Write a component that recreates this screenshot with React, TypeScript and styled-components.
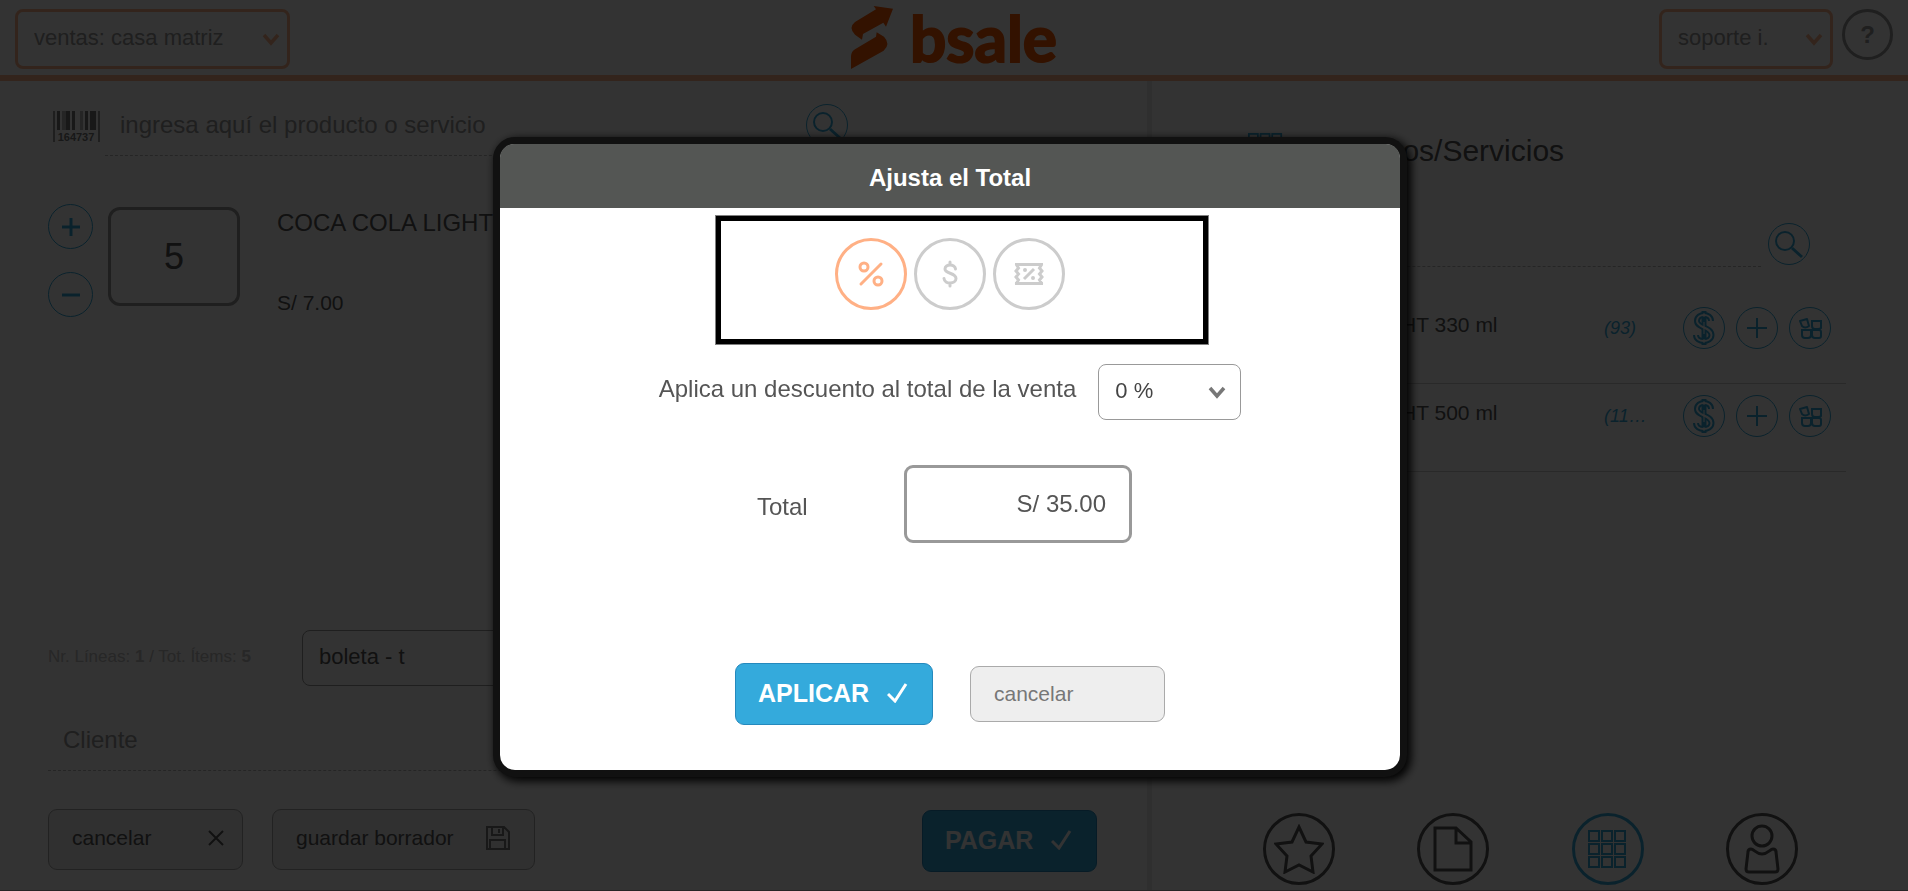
import React from "react";
import styled, { createGlobalStyle, css } from "styled-components";

const INK = "#555";
const GREY = "#999";
const BLUE = "#34aadc";
const ORANGE = "#ffb48c";

const GlobalStyle = createGlobalStyle`
  *, *::before, *::after { box-sizing: border-box; }
  body {
    margin: 0;
    background: #fff;
    color: ${INK};
    font-family: Arial, "Liberation Sans", sans-serif;
    font-size: 24px;
    line-height: 28px;
  }
  button, input, select { font-family: inherit; margin: 0; }
  h1, h2, p, ul { margin: 0; padding: 0; font-weight: normal; }
  ul { list-style: none; }
`;

const Page = styled.div`
  min-height: 100vh;
  display: flex;
  flex-direction: column;
  border-bottom: 1px solid #c8b8be;
`;

const TopBar = styled.header`
  display: grid;
  grid-template-columns: 1fr auto 1fr;
  align-items: start;
  height: 81px;
  padding: 0 15px;
  border-bottom: 6px solid ${ORANGE};
`;

const TopLeft = styled.div`
  padding-top: 9px;
`;

const TopRight = styled.div`
  display: flex;
  justify-content: flex-end;
  gap: 9px;
  padding-top: 9px;
`;

const Brand = styled.a`
  display: flex;
  align-items: flex-start;
  gap: 17px;
  padding-top: 6px;
  color: #ff5a00;
  text-decoration: none;
`;

const BrandName = styled.span`
  font-family: Lato, sans-serif;
  font-weight: 700;
  font-size: 64px;
  line-height: 64px;
  -webkit-text-stroke: 2px #ff5a00;
`;

const HelpButton = styled.button`
  width: 51px;
  height: 51px;
  padding: 0;
  border: 3px solid ${GREY};
  border-radius: 50%;
  background: none;
  color: ${GREY};
  font-size: 24px;
  font-weight: bold;
`;

type SelectTone = "accent" | "plain" | "dialog";

const selectTones = {
  accent: css`
    height: 60px;
    border: 3px solid ${ORANGE};
    color: ${GREY};
  `,
  plain: css`
    height: 56px;
    border: 1px solid ${GREY};
    color: ${INK};
  `,
  dialog: css`
    height: 56px;
    border: 1px solid ${GREY};
    color: #444;
  `,
};

const SelectBox = styled.div<{ $width: number }>`
  position: relative;
  width: ${(p) => p.$width}px;
  max-width: 100%;

  svg {
    position: absolute;
    right: 10px;
    top: 50%;
    margin-top: -6px;
    pointer-events: none;
  }
`;

const SelectField = styled.select<{ $tone: SelectTone }>`
  appearance: none;
  display: block;
  width: 100%;
  padding: 0 36px 3px 16px;
  border-radius: 8px;
  background: #fff;
  font-size: 22px;
  ${(p) => selectTones[p.$tone]}
`;

const Columns = styled.main`
  flex: 1;
  display: grid;
  grid-template-columns: minmax(0, 32fr) minmax(0, 21fr);
`;

const SalePane = styled.section`
  display: flex;
  flex-direction: column;
  padding: 23px 50px 18px 48px;
  border-right: 5px solid #ebebeb;
`;

const SearchRow = styled.form`
  display: flex;
  align-items: flex-start;
`;

const SaleSearch = styled(SearchRow)`
  padding: 0 249px 0 5px;
`;

const BarcodeSlot = styled.span`
  width: 52px;
  padding-top: 7px;
  line-height: 0;
`;

const LineInput = styled.input`
  flex: 1;
  min-width: 0;
  height: 52px;
  padding: 0 15px 10px;
  border: 0;
  border-bottom: 1px dashed #bbb;
  background: none;
  color: ${GREY};
  font-size: 24px;

  &::placeholder {
    color: ${GREY};
    opacity: 1;
  }
`;

const RoundButton = styled.button<{ $size?: number }>`
  flex: none;
  display: flex;
  align-items: center;
  justify-content: center;
  width: ${(p) => p.$size ?? 42}px;
  height: ${(p) => p.$size ?? 42}px;
  padding: 0;
  border: 1px solid ${BLUE};
  border-radius: 50%;
  background: none;
  color: ${BLUE};
`;

const SaleLine = styled.div`
  display: flex;
  align-items: flex-start;
  margin-top: 48px;
`;

const Stepper = styled.div`
  display: flex;
  flex-direction: column;
  gap: 23px;
  margin-right: 15px;
`;

const QuantityInput = styled.input`
  width: 132px;
  height: 99px;
  margin-top: 3px;
  padding: 0;
  border: 3px solid ${GREY};
  border-radius: 12px;
  background: none;
  color: ${INK};
  font-size: 36px;
  text-align: center;
`;

const LineInfo = styled.div`
  display: flex;
  flex-direction: column;
  gap: 54px;
  padding: 5px 0 0 37px;
`;

const LinePrice = styled.p`
  font-size: 21px;
  line-height: 24px;
`;

const SaleFooter = styled.div`
  margin-top: auto;
`;

const DocumentRow = styled.div`
  display: flex;
  align-items: center;
`;

const Counts = styled.p`
  flex: none;
  width: 254px;
  padding-bottom: 2px;
  color: #c0c0c0;
  font-size: 17px;
  line-height: 24px;
`;

const ClientRow = styled.div`
  display: flex;
  margin: 33px 0 38px;
`;

const ButtonRow = styled.div`
  display: flex;
  align-items: flex-start;
  gap: 29px;
`;

const ActionButton = styled.button<{ $width: number }>`
  display: flex;
  align-items: center;
  justify-content: space-between;
  width: ${(p) => p.$width}px;
  height: 61px;
  padding: 0 18px 4px 23px;
  border: 1px solid #aaa;
  border-radius: 9px;
  background: #eee;
  color: ${INK};
  font-size: 21px;
`;

const DraftButton = styled(ActionButton)`
  padding-right: 24px;
`;

const PrimaryButton = styled(ActionButton)`
  height: 62px;
  padding: 0 24px 2px 22px;
  border-color: #2589bd;
  background: ${BLUE};
  color: #fff;
  font-size: 25px;
  font-weight: bold;
`;

const PayButton = styled(PrimaryButton)`
  margin: 1px 0 0 auto;
`;

const CatalogPane = styled.section`
  display: flex;
  flex-direction: column;
  padding: 50px 62px 5px 70px;
`;

const CatalogTitle = styled.h2`
  display: flex;
  gap: 16px;
  padding-left: 26px;
  font-size: 30px;
  line-height: 40px;
`;

const TitleIcon = styled.span`
  display: flex;
  padding-top: 2px;
  color: ${BLUE};
`;

const CatalogSearch = styled(SearchRow)`
  gap: 7px;
  margin-top: 52px;
  padding-right: 36px;

  input { height: 44px; }
`;

const ProductList = styled.ul`
  margin-top: 29px;
`;

const Product = styled.li`
  display: flex;
  height: 88px;
  padding: 11px 15px 0 18px;
  border-bottom: 1px solid #ccc;
  font-size: 21px;
`;

const ProductName = styled.span`
  flex: 1;
  line-height: 36px;
  white-space: nowrap;
`;

const Stock = styled.span`
  width: 79px;
  color: ${BLUE};
  font-size: 18px;
  font-style: italic;
  line-height: 42px;
`;

const ProductActions = styled.div`
  display: flex;
  gap: 11px;
`;

const BottomNav = styled.nav`
  display: grid;
  grid-template-columns: repeat(4, 1fr);
  justify-items: center;
  margin: auto 7px 0 0;
`;

const NavButton = styled.button<{ $active?: boolean }>`
  display: flex;
  align-items: center;
  justify-content: center;
  width: 72px;
  height: 72px;
  padding: 0;
  border: 3px solid currentColor;
  border-radius: 50%;
  background: none;
  color: ${(p) => (p.$active ? BLUE : INK)};
`;

const Backdrop = styled.div`
  position: fixed;
  inset: 0;
  display: flex;
  align-items: flex-start;
  justify-content: center;
  padding: 137px 8px 0 0;
  background: rgba(0, 0, 0, 0.8);
`;

const Dialog = styled.section`
  position: relative;
  width: 914px;
  max-width: 100%;
  border: 7px solid #111;
  border-radius: 22px;
  background: #fff;
  box-shadow: 3px 3px 10px 1px #000;
`;

const DialogTitle = styled.h2`
  height: 64px;
  padding-top: 2px;
  border-radius: 14px 14px 0 0;
  background: #545654;
  color: #fff;
  font-size: 24px;
  font-weight: bold;
  line-height: 64px;
  text-align: center;
`;

const DialogBody = styled.form`
  display: flex;
  flex-direction: column;
  align-items: center;
  padding: 30px 0 45px;
`;

const ModeFrame = styled.div`
  position: absolute;
  left: 215px;
  top: 71px;
  width: 494px;
  height: 130px;
  border: 6px solid #000;
  outline: 1px solid #808080;
  outline-offset: -1px;
  pointer-events: none;
`;

const ModeRow = styled.div`
  display: flex;
  gap: 7px;
`;

const ModeButton = styled.button<{ $active?: boolean }>`
  display: flex;
  align-items: center;
  justify-content: center;
  width: 72px;
  height: 72px;
  padding: 0;
  border: 3px solid currentColor;
  border-radius: 50%;
  background: none;
  color: ${(p) => (p.$active ? "#ffb085" : "#ccc")};
`;

const DiscountRow = styled.div`
  display: flex;
  align-items: center;
  gap: 22px;
  margin-top: 54px;

  label { padding-bottom: 7px; }
  svg { right: 15px; }
`;

const TotalRow = styled.div`
  display: flex;
  align-items: center;
  width: 386px;
  margin-top: 45px;

  label {
    width: 147px;
    padding-top: 5px;
  }
`;

const TotalInput = styled.input`
  width: 228px;
  height: 78px;
  padding: 0 23px 0 22px;
  border: 3px solid ${GREY};
  border-radius: 9px;
  background: #fff;
  color: ${INK};
  font-size: 24px;
  text-align: right;
`;

const DialogActions = styled.div`
  display: flex;
  align-items: center;
  gap: 37px;
  margin-top: 120px;
`;

const DismissButton = styled(ActionButton)`
  height: 56px;
  padding: 0 23px;
  color: #777;
`;

const Chevron = ({ color }: { color: string }) => (
  <svg width="18" height="13" viewBox="0 0 18 13" fill="none" stroke={color} strokeWidth="3.500">
    <path d="M2 2l7 8 7-8" />
  </svg>
);

const Tick = () => (
  <svg width="21" height="20" viewBox="0 0 21 20" fill="none" stroke="currentColor" strokeWidth="3">
    <path d="M1 11l7 7L19 1" />
  </svg>
);

const LogoMark = () => (
  <svg width="42" height="63" viewBox="0 0 126 189" fill="currentColor">
    <path d="M68 0L126 8L105 62L97 50L36 84L33 101L12 86Q-9 65 12 48L75 10Z" />
    <path d="M77 79L99 92Q120 114 98 134L0 189V150Q1 137 12 130L75 92Z" />
  </svg>
);

const Barcode = () => (
  <svg width="47" height="34" viewBox="0 0 47 34" fill="#777">
    <path d="M0 0h2v31H0zM45 0h2v31h-2z" fill="#999" />
    <path d="M4 0h3v19H4zM13 0h4v19h-4zM19 0h3v19h-3zM32 0h3v19h-3zM37 0h6v19h-6z" />
    <path d="M9 0h4v19H9zM27 0h3v19h-3z" fill="#bbb" />
    <text x="23" y="30" textAnchor="middle" fontSize="11" fontWeight="bold" fontFamily="Arial, Liberation Sans, sans-serif">164737</text>
  </svg>
);

const Lens = () => (
  <svg width="40" height="40" viewBox="0 0 40 40" fill="none" stroke="currentColor" strokeWidth="2">
    <circle cx="16" cy="17" r="9" />
    <path d="M23 24l10 9" strokeWidth="3" />
  </svg>
);

const PlusMinus = ({ minus }: { minus?: boolean }) => (
  <svg width="18" height="18" viewBox="0 0 18 18" stroke="currentColor" strokeWidth="3">
    <path d={minus ? "M0 9h18" : "M0 9h18M9 0v18"} />
  </svg>
);

const ThinPlus = () => (
  <svg width="20" height="20" viewBox="0 0 20 20" stroke="currentColor" strokeWidth="2">
    <path d="M0 10h20M10 0v20" />
  </svg>
);

const dollarCurve = "M18 11C18 3 4 3 4 11C4 18 18.500 17 18.500 25C18.500 33 3 33 3 25";

const OutlinedDollar = () => (
  <svg width="22" height="36" viewBox="0 0 22 36" fill="none">
    <path d={dollarCurve} stroke="currentColor" strokeWidth="6" />
    <path d="M11 1v34" stroke="currentColor" strokeWidth="5" />
    <path d={dollarCurve} stroke="#fff" strokeWidth="2" />
    <path d="M11 3v4M11 12v12M11 29v4" stroke="#fff" strokeWidth="1" />
  </svg>
);

const Blocks = () => (
  <svg width="24" height="24" viewBox="0 0 24 24" fill="none" stroke="currentColor" strokeWidth="2">
    <path d="M2 5l7-2 2 7q-4 3-7 0z" strokeLinejoin="round" />
    <path d="M14 5h9v7q-1 1-3 1h-3q-3 0-3-3z" />
    <path d="M4 14h9v5q0 3-3 3H7q-3 0-3-3zM14 14h7q2 0 2 2v4q0 2-2 2h-4q-3 0-3-3z" />
  </svg>
);

const GridIcon = ({ size }: { size: number }) => (
  <svg width={size} height={size} viewBox="0 0 39 39" fill="none" stroke="currentColor" strokeWidth="2">
    {[1, 14, 27].map((y) =>
      [1, 14, 27].map((x) => <rect key={`${x}-${y}`} x={x} y={y} width="10" height="10" />)
    )}
  </svg>
);

const Cross = () => (
  <svg width="16" height="16" viewBox="0 0 16 16" stroke="currentColor" strokeWidth="2">
    <path d="M1 1l14 14M15 1L1 15" />
  </svg>
);

const Floppy = () => (
  <svg width="24" height="24" viewBox="0 0 24 24" fill="none" stroke="#777" strokeWidth="2">
    <path d="M1 1h17l5 5v17H1zM6 1v8h11V1M13 3v4M4 23v-9h15v9" />
  </svg>
);

const Star = () => (
  <svg width="50" height="50" viewBox="0 0 50 50" fill="none" stroke="currentColor" strokeWidth="3">
    <path d="M25 3l7 15 16 2-11 12 2 16-14-7-14 7 2-16L2 20l16-2z" />
  </svg>
);

const Sheet = () => (
  <svg width="40" height="46" viewBox="0 0 40 46" fill="none" stroke="currentColor" strokeWidth="3">
    <path d="M2 2h21l15 14v28H2zM23 2v15h15" />
  </svg>
);

const Person = () => (
  <svg width="36" height="50" viewBox="0 0 36 50" fill="none" stroke="currentColor" strokeWidth="3" strokeLinejoin="round">
    <circle cx="18" cy="12" r="10" />
    <path d="M7 25c3 0 5 5 11 5s8-5 11-5c2 0 3 1 3 3l2 17c0 2-1 3-3 3H5c-2 0-3-1-3-3l2-17c0-2 1-3 3-3z" />
  </svg>
);

const Percent = () => (
  <svg width="26" height="26" viewBox="0 0 26 26" fill="none" stroke="currentColor" strokeWidth="3" strokeLinecap="round">
    <circle cx="6" cy="6" r="4" />
    <circle cx="20" cy="20" r="4" />
    <path d="M23 3L3 23" />
  </svg>
);

const Dollar = () => (
  <svg width="16" height="28" viewBox="0 0 16 28" fill="none" stroke="currentColor" strokeWidth="3" strokeLinecap="round">
    <path d="M13.500 9C13 3.500 3 3.500 3 9C3 14 14 12.500 14 18.500C14 24.500 2.500 24.500 2 18.500M8 2v3M8 23v3" />
  </svg>
);

const Ticket = () => (
  <svg width="30" height="22" viewBox="0 0 30 22" fill="none" stroke="currentColor" strokeWidth="3">
    <path d="M1 1.500h28M1 20.500h28M2 1l2.500 4L2 8l2.500 3L2 14l2.500 3L2 21M28 1l-2.500 4L28 8l-2.500 3L28 14l-2.500 3L28 21M20 6L10 16" />
    <circle cx="11" cy="7" r="1" strokeWidth="2" />
    <circle cx="19" cy="15" r="1" strokeWidth="2" />
  </svg>
);

const products = [
  { name: "COCA COLA LIGHT 330 ml", stock: "(93)" },
  { name: "COCA COLA LIGHT 500 ml", stock: "(11…" },
];

interface PickerProps {
  label?: string;
  id?: string;
  width: number;
  tone: SelectTone;
  value: string;
}

const arrowColors = { accent: ORANGE, plain: "#777", dialog: "#777" };

const Picker = ({ label, id, width, tone, value }: PickerProps) => (
  <SelectBox $width={width}>
    <SelectField id={id} aria-label={label} $tone={tone} defaultValue={value}>
      <option>{value}</option>
    </SelectField>
    <Chevron color={arrowColors[tone]} />
  </SelectBox>
);

export default function App() {
  return (
    <>
      <GlobalStyle />
      <Page>
        <TopBar>
          <TopLeft>
            <Picker label="Sucursal" width={275} tone="accent" value="ventas: casa matriz" />
          </TopLeft>
          <Brand href="#">
            <LogoMark />
            <BrandName>bsale</BrandName>
          </Brand>
          <TopRight>
            <Picker label="Usuario" width={174} tone="accent" value="soporte i." />
            <HelpButton type="button">?</HelpButton>
          </TopRight>
        </TopBar>

        <Columns>
          <SalePane>
            <SaleSearch>
              <BarcodeSlot><Barcode /></BarcodeSlot>
              <LineInput aria-label="Producto o servicio" placeholder="ingresa aquí el producto o servicio" />
              <RoundButton type="button" aria-label="Buscar"><Lens /></RoundButton>
            </SaleSearch>

            <SaleLine>
              <Stepper>
                <RoundButton type="button" $size={45} aria-label="Sumar"><PlusMinus /></RoundButton>
                <RoundButton type="button" $size={45} aria-label="Restar"><PlusMinus minus /></RoundButton>
              </Stepper>
              <QuantityInput aria-label="Cantidad" defaultValue="5" />
              <LineInfo>
                <p>COCA COLA LIGHT</p>
                <LinePrice>S/ 7.00</LinePrice>
              </LineInfo>
            </SaleLine>

            <SaleFooter>
              <DocumentRow>
                <Counts>Nr. Líneas: <b>1</b> / Tot. Ítems: <b>5</b></Counts>
                <Picker label="Documento" width={320} tone="plain" value="boleta - t" />
              </DocumentRow>
              <ClientRow>
                <LineInput aria-label="Cliente" placeholder="Cliente" />
              </ClientRow>
              <ButtonRow>
                <ActionButton type="button" $width={195}>cancelar <Cross /></ActionButton>
                <DraftButton type="button" $width={263}>guardar borrador <Floppy /></DraftButton>
                <PayButton type="button" $width={175}>PAGAR <Tick /></PayButton>
              </ButtonRow>
            </SaleFooter>
          </SalePane>

          <CatalogPane>
            <CatalogTitle>
              <TitleIcon><GridIcon size={35} /></TitleIcon>
              Productos/Servicios
            </CatalogTitle>
            <CatalogSearch>
              <LineInput aria-label="Buscar en productos" />
              <RoundButton type="button" aria-label="Buscar"><Lens /></RoundButton>
            </CatalogSearch>
            <ProductList>
              {products.map((product) => (
                <Product key={product.name}>
                  <ProductName>{product.name}</ProductName>
                  <Stock>{product.stock}</Stock>
                  <ProductActions>
                    <RoundButton type="button" aria-label="Precio"><OutlinedDollar /></RoundButton>
                    <RoundButton type="button" aria-label="Agregar"><ThinPlus /></RoundButton>
                    <RoundButton type="button" aria-label="Variantes"><Blocks /></RoundButton>
                  </ProductActions>
                </Product>
              ))}
            </ProductList>
            <BottomNav>
              <NavButton type="button" aria-label="Favoritos"><Star /></NavButton>
              <NavButton type="button" aria-label="Documentos"><Sheet /></NavButton>
              <NavButton type="button" aria-label="Productos" $active><GridIcon size={39} /></NavButton>
              <NavButton type="button" aria-label="Clientes"><Person /></NavButton>
            </BottomNav>
          </CatalogPane>
        </Columns>
      </Page>

      <Backdrop>
        <Dialog role="dialog" aria-labelledby="dialog-title">
          <DialogTitle id="dialog-title">Ajusta el Total</DialogTitle>
          <DialogBody>
            <ModeRow>
              <ModeButton type="button" aria-label="Porcentaje" $active><Percent /></ModeButton>
              <ModeButton type="button" aria-label="Monto"><Dollar /></ModeButton>
              <ModeButton type="button" aria-label="Cupón"><Ticket /></ModeButton>
            </ModeRow>
            <DiscountRow>
              <label htmlFor="discount">Aplica un descuento al total de la venta</label>
              <Picker id="discount" width={143} tone="dialog" value="0 %" />
            </DiscountRow>
            <TotalRow>
              <label htmlFor="total">Total</label>
              <TotalInput id="total" defaultValue="S/ 35.00" />
            </TotalRow>
            <DialogActions>
              <PrimaryButton type="button" $width={198}>APLICAR <Tick /></PrimaryButton>
              <DismissButton type="button" $width={195}>cancelar</DismissButton>
            </DialogActions>
          </DialogBody>
          <ModeFrame />
        </Dialog>
      </Backdrop>
    </>
  );
}
